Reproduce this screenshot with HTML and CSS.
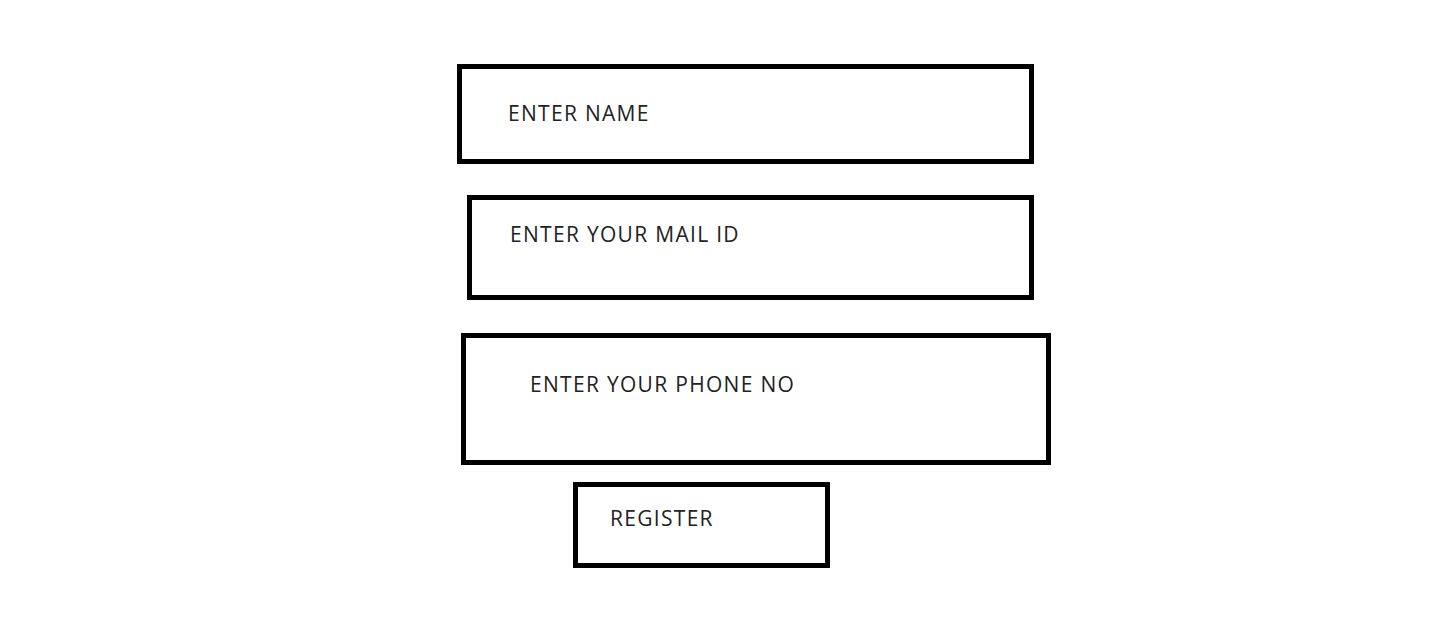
FILE: index.html
```html
<!DOCTYPE html>
<html lang="en">
<head>
<meta charset="utf-8">
<title>Register</title>
<link rel="stylesheet" href="styles.css">
</head>
<body>
<form class="form">
  <div class="field field-name"><span class="label">ENTER NAME</span></div>
  <div class="field field-mail"><span class="label">ENTER YOUR MAIL ID</span></div>
  <div class="field field-phone"><span class="label">ENTER YOUR PHONE NO</span></div>
  <div class="field field-register"><span class="label">REGISTER</span></div>
</form>
</body>
</html>
```
FILE: styles.css
```css
html, body {
  margin: 0;
  padding: 0;
  background: #ffffff;
}

.form {
  display: flex;
  flex-direction: column;
  align-items: flex-start;
  padding-top: 64px;
  font-family: "Open Sans", "Liberation Sans", sans-serif;
  color: #222222;
}

.field {
  box-sizing: border-box;
  border: 5px solid #000;
}

.label {
  display: block;
  font-size: 21px;
  line-height: 20px;
  letter-spacing: 1.3px;
  white-space: nowrap;
}

.field-name {
  margin-left: 457px;
  width: 577px;
  height: 100px;
  padding: 34px 0 0 46px;
}

.field-mail {
  margin-top: 31px;
  margin-left: 467px;
  width: 567px;
  height: 105px;
  padding: 24px 0 0 38px;
}

.field-phone {
  margin-top: 33px;
  margin-left: 461px;
  width: 590px;
  height: 132px;
  padding: 36px 0 0 64px;
}

.field-register {
  margin-top: 17px;
  margin-left: 573px;
  width: 257px;
  height: 86px;
  padding: 21px 0 0 32px;
}
```
